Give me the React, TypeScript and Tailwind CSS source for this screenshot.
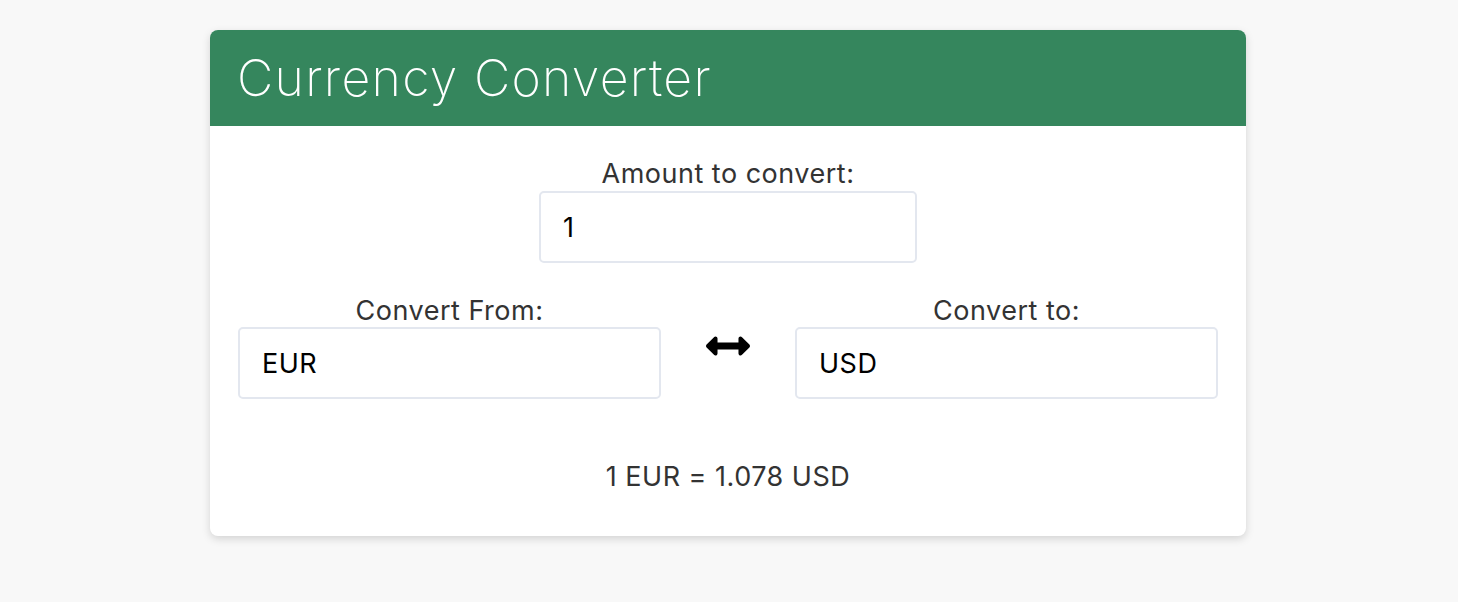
import React, { useState } from "react";
import { FaArrowsAltH } from "react-icons/fa";

const RATE = 1.078;

const App: React.FC = () => {
  const [amount, setAmount] = useState("1");
  const [from, setFrom] = useState("EUR");
  const [to, setTo] = useState("USD");

  const value = parseFloat(amount) || 0;

  return (
    <div className="min-h-screen bg-[#f8f8f8] pt-[30px] font-['Inter',sans-serif]">
      <div className="mx-auto w-[1036px] -translate-x-px rounded-lg bg-white shadow-[0_3px_8px_rgba(0,0,0,0.15)]">
        {/* header */}
        <div className="flex h-[96px] items-center rounded-t-lg bg-[#35865d] px-[27px]">
          <h1 className="text-[50px] font-extralight leading-none tracking-[1.3px] text-white">
            Currency Converter
          </h1>
        </div>

        <div className="px-[28px] pt-[28px] pb-[41px] text-[27px] tracking-[0.5px] text-[#333]">
          <div className="flex flex-col items-center">
            <label className="pt-[4px] leading-[32px]">Amount to convert:</label>
            <input
              value={amount}
              onChange={(e) => setAmount(e.target.value)}
              className="mt-px h-[72px] w-[378px] rounded-[5px] border-2 border-[#e3e7ef] px-[22px] text-black outline-none"
            />
          </div>

          <div className="mt-[28px] grid grid-cols-[423px_1fr_423px] items-start">
            <div className="flex flex-col items-center">
              <label className="pt-[3px] leading-[33px]">Convert From:</label>
              <input
                value={from}
                onChange={(e) => setFrom(e.target.value)}
                className="h-[72px] w-full rounded-[5px] border-2 border-[#e3e7ef] px-[22px] text-black outline-none"
              />
            </div>
            <div className="flex justify-center pt-[33px]">
              <FaArrowsAltH className="h-[44px] w-[44px] text-black" />
            </div>
            <div className="flex flex-col items-center">
              <label className="pt-[3px] leading-[33px]">Convert to:</label>
              <input
                value={to}
                onChange={(e) => setTo(e.target.value)}
                className="h-[72px] w-full rounded-[5px] border-2 border-[#e3e7ef] px-[22px] text-black outline-none"
              />
            </div>
          </div>

          <p className="mt-[60px] text-center leading-[36px]">
            {value} {from} = {(value * RATE).toFixed(3)} {to}
          </p>
        </div>
      </div>
    </div>
  );
};

export default App;
